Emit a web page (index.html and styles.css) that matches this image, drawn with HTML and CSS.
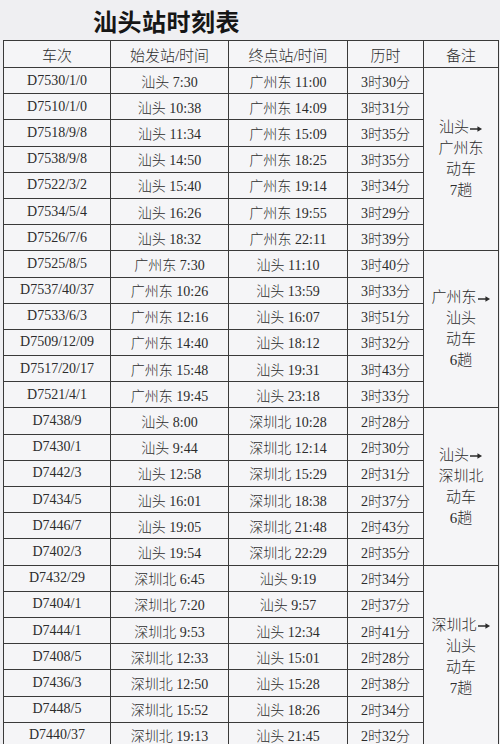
FILE: index.html
```html
<!DOCTYPE html>
<html lang="zh-CN">
<head>
<meta charset="utf-8">
<title>汕头站时刻表</title>
<link rel="stylesheet" href="styles.css">
</head>
<body>
<div class="page">
  <h1 class="title">汕头站时刻表</h1>
  <table class="tt">
    <colgroup>
      <col class="c1"><col class="c2"><col class="c3"><col class="c4"><col class="c5">
    </colgroup>
    <thead>
      <tr><th>车次</th><th>始发站/时间</th><th>终点站/时间</th><th>历时</th><th>备注</th></tr>
    </thead>
    <tbody>
      <tr><td>D7530/1/0</td><td>汕头 7:30</td><td>广州东 11:00</td><td>3时30分</td>
        <td class="note" rowspan="7"><span>汕头<svg class="arr" viewBox="0 0 14 8" width="13" height="8"><path d="M0 4H9" stroke="#2a2a2a" stroke-width="1.6"/><path d="M8 1L13 4L8 7Z" fill="#2a2a2a"/></svg></span><span>广州东</span><span>动车</span><span>7趟</span></td></tr>
      <tr><td>D7510/1/0</td><td>汕头 10:38</td><td>广州东 14:09</td><td>3时31分</td></tr>
      <tr><td>D7518/9/8</td><td>汕头 11:34</td><td>广州东 15:09</td><td>3时35分</td></tr>
      <tr><td>D7538/9/8</td><td>汕头 14:50</td><td>广州东 18:25</td><td>3时35分</td></tr>
      <tr><td>D7522/3/2</td><td>汕头 15:40</td><td>广州东 19:14</td><td>3时34分</td></tr>
      <tr><td>D7534/5/4</td><td>汕头 16:26</td><td>广州东 19:55</td><td>3时29分</td></tr>
      <tr><td>D7526/7/6</td><td>汕头 18:32</td><td>广州东 22:11</td><td>3时39分</td></tr>

      <tr><td>D7525/8/5</td><td>广州东 7:30</td><td>汕头 11:10</td><td>3时40分</td>
        <td class="note" rowspan="6"><span>广州东<svg class="arr" viewBox="0 0 14 8" width="13" height="8"><path d="M0 4H9" stroke="#2a2a2a" stroke-width="1.6"/><path d="M8 1L13 4L8 7Z" fill="#2a2a2a"/></svg></span><span>汕头</span><span>动车</span><span>6趟</span></td></tr>
      <tr><td>D7537/40/37</td><td>广州东 10:26</td><td>汕头 13:59</td><td>3时33分</td></tr>
      <tr><td>D7533/6/3</td><td>广州东 12:16</td><td>汕头 16:07</td><td>3时51分</td></tr>
      <tr><td>D7509/12/09</td><td>广州东 14:40</td><td>汕头 18:12</td><td>3时32分</td></tr>
      <tr><td>D7517/20/17</td><td>广州东 15:48</td><td>汕头 19:31</td><td>3时43分</td></tr>
      <tr><td>D7521/4/1</td><td>广州东 19:45</td><td>汕头 23:18</td><td>3时33分</td></tr>

      <tr><td>D7438/9</td><td>汕头 8:00</td><td>深圳北 10:28</td><td>2时28分</td>
        <td class="note" rowspan="6"><span>汕头<svg class="arr" viewBox="0 0 14 8" width="13" height="8"><path d="M0 4H9" stroke="#2a2a2a" stroke-width="1.6"/><path d="M8 1L13 4L8 7Z" fill="#2a2a2a"/></svg></span><span>深圳北</span><span>动车</span><span>6趟</span></td></tr>
      <tr><td>D7430/1</td><td>汕头 9:44</td><td>深圳北 12:14</td><td>2时30分</td></tr>
      <tr><td>D7442/3</td><td>汕头 12:58</td><td>深圳北 15:29</td><td>2时31分</td></tr>
      <tr><td>D7434/5</td><td>汕头 16:01</td><td>深圳北 18:38</td><td>2时37分</td></tr>
      <tr><td>D7446/7</td><td>汕头 19:05</td><td>深圳北 21:48</td><td>2时43分</td></tr>
      <tr><td>D7402/3</td><td>汕头 19:54</td><td>深圳北 22:29</td><td>2时35分</td></tr>

      <tr><td>D7432/29</td><td>深圳北 6:45</td><td>汕头 9:19</td><td>2时34分</td>
        <td class="note" rowspan="7"><span>深圳北<svg class="arr" viewBox="0 0 14 8" width="13" height="8"><path d="M0 4H9" stroke="#2a2a2a" stroke-width="1.6"/><path d="M8 1L13 4L8 7Z" fill="#2a2a2a"/></svg></span><span>汕头</span><span>动车</span><span>7趟</span></td></tr>
      <tr><td>D7404/1</td><td>深圳北 7:20</td><td>汕头 9:57</td><td>2时37分</td></tr>
      <tr><td>D7444/1</td><td>深圳北 9:53</td><td>汕头 12:34</td><td>2时41分</td></tr>
      <tr><td>D7408/5</td><td>深圳北 12:33</td><td>汕头 15:01</td><td>2时28分</td></tr>
      <tr><td>D7436/3</td><td>深圳北 12:50</td><td>汕头 15:28</td><td>2时38分</td></tr>
      <tr><td>D7448/5</td><td>深圳北 15:52</td><td>汕头 18:26</td><td>2时34分</td></tr>
      <tr><td>D7440/37</td><td>深圳北 19:13</td><td>汕头 21:45</td><td>2时32分</td></tr>
    </tbody>
  </table>
</div>
</body>
</html>
```

FILE: styles.css
```css
html, body {
  margin: 0;
  padding: 0;
  background: #efeff2;
}
body {
  width: 500px;
  height: 744px;
  overflow: hidden;
  color: #2c2c2c;
  font-family: "Liberation Serif", "Noto Sans CJK SC", serif;
}
.page {
  padding: 0 2px 0 3px;
}
.title {
  margin: 0;
  height: 40px;
  padding-left: 90px;
  font-family: "Noto Sans CJK SC", sans-serif;
  font-weight: 700;
  font-size: 24px;
  line-height: 42px;
  letter-spacing: 0.5px;
  color: #161616;
}
.tt {
  border-collapse: collapse;
  table-layout: fixed;
  width: 495px;
  background: #f5f5f7;
}
.c1 { width: 107px; }
.c2 { width: 118px; }
.c3 { width: 119px; }
.c4 { width: 76px; }
.c5 { width: 75px; }
.tt th, .tt td {
  border: 1.5px solid #3a3a3a;
  padding: 0;
  text-align: center;
  vertical-align: middle;
  white-space: nowrap;
  font-size: 14px;
  font-weight: 300;
}
.tt th {
  height: 26px;
  font-size: 15px;
}
.tt tbody tr {
  height: 26.2px;
}
.tt td.note {
  font-size: 15px;
  line-height: 21px;
}
.note span {
  display: block;
}
.arr {
  vertical-align: middle;
  margin-left: 1px;
}
```
